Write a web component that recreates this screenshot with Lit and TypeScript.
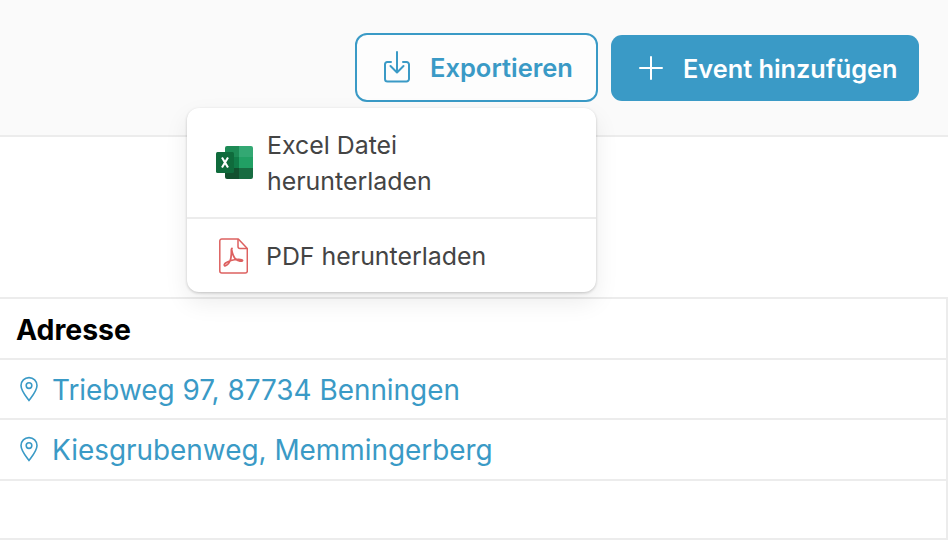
import { LitElement, html, css, svg } from "lit";
import { customElement } from "lit/decorators.js";

const pin = svg`<svg class="pin" width="20" height="26" viewBox="0 0 20 26" fill="none" stroke="#3a9ac6" stroke-width="1.6"><path d="M10 24.6C6.5 20 2 14.8 2 9.6 2 5 5.6 1.6 10 1.6S18 5 18 9.6C18 14.8 13.5 20 10 24.6Z" stroke-linejoin="round"/><circle cx="10" cy="9.6" r="2.8"/></svg>`;

@customElement("app-root")
export class AppRoot extends LitElement {
  static styles = css`
    :host {
      display: block;
      position: relative;
      width: 948px;
      height: 540px;
      overflow: hidden;
      background: #fff;
      font-family: Inter, "Noto Sans", sans-serif;
    }
    .top {
      box-sizing: border-box;
      height: 137px;
      background: #fafafa;
      border-bottom: 2px solid #ececec;
      display: flex;
      justify-content: flex-end;
      align-items: flex-start;
      gap: 13px;
      padding: 33px 29px 0 0;
    }
    .btn {
      box-sizing: border-box;
      display: flex;
      align-items: center;
      font-weight: 600;
      white-space: nowrap;
    }
    .export {
      width: 243px;
      height: 69px;
      border: 2px solid #3a9ac6;
      border-radius: 12px;
      background: #fdfdfd;
      color: #3a9ac6;
      padding-left: 26px;
      gap: 19px;
      font-size: 25.5px;
    }
    .add {
      width: 308px;
      height: 66px;
      margin-top: 2px;
      border-radius: 11px;
      background: #3a9ac6;
      color: #fff;
      padding-left: 28px;
      gap: 20px;
      font-size: 25.3px;
    }
    .menu {
      position: absolute;
      left: 187px;
      top: 108px;
      width: 409px;
      height: 184px;
      background: #fff;
      border-radius: 12px;
      box-shadow: 0 1px 3px rgba(0, 0, 0, 0.2), 0 10px 24px rgba(0, 0, 0, 0.08);
      color: #444;
      font-size: 24.9px;
      line-height: 36px;
      display: flex;
      flex-direction: column;
    }
    .item {
      display: flex;
      align-items: center;
      box-sizing: border-box;
    }
    .item.xl {
      height: 111px;
      padding-left: 29px;
      gap: 14px;
      border-bottom: 2px solid #ececec;
    }
    .item.pdf {
      flex: 1;
      padding-left: 32px;
      gap: 18px;
    }
    .table {
      position: absolute;
      left: 0;
      right: 0;
      top: 297px;
      bottom: 0;
      border-top: 2px solid #ececec;
      border-right: 2px solid #ececec;
      border-bottom: 2px solid #ececec;
      box-sizing: border-box;
    }
    .row {
      box-sizing: border-box;
      height: 60.5px;
      border-bottom: 2px solid #ececec;
      display: flex;
      align-items: center;
      padding-left: 16px;
      font-size: 27.9px;
      color: #3a9ac6;
      gap: 13px;
      white-space: nowrap;
    }
    .row.head {
      color: #000;
      font-weight: 700;
      font-size: 28.4px;
    }
    .label {
      padding-top: 2px;
    }
    .pin {
      margin-left: 3px;
    }
  `;

  render() {
    return html`
      <div class="top">
        <div class="btn export">
          <svg width="28" height="33" viewBox="0 0 28 33" fill="none" stroke="#3a9ac6" stroke-width="2" stroke-linecap="round" stroke-linejoin="round">
            <path d="M8 11H4a2.500 2.500 0 0 0-2 2.500V28a2.500 2.500 0 0 0 2.500 2.500h19A2.500 2.500 0 0 0 26 28V13.500A2.500 2.500 0 0 0 23.500 11H20"/>
            <path d="M14 1v20M7.500 15l6.500 6.500 6.500-6.500"/>
          </svg>
          <span>Exportieren</span>
        </div>
        <div class="btn add">
          <svg width="24" height="24" viewBox="0 0 24 24" fill="none" stroke="#fff" stroke-width="2" stroke-linecap="round"><path d="M12 1v22M1 12h22"/></svg>
          <span>Event hinzufügen</span>
        </div>
      </div>
      <div class="table">
        <div class="row head"><span class="label">Adresse</span></div>
        <div class="row">${pin}<span class="label">Triebweg 97, 87734 Benningen</span></div>
        <div class="row">${pin}<span class="label">Kiesgrubenweg, Memmingerberg</span></div>
      </div>
      <div class="menu">
        <div class="item xl">
          <svg width="37" height="33" viewBox="0 0 37 33">
            <path d="M11 0h12v11H9V2a2 2 0 0 1 2-2Z" fill="#1d8a55"/>
            <path d="M23 0h12a2 2 0 0 1 2 2v9H23Z" fill="#33a873"/>
            <rect x="9" y="11" width="14" height="11" fill="#107c48"/>
            <rect x="23" y="11" width="14" height="11" fill="#21a064"/>
            <path d="M9 22h14v11H11a2 2 0 0 1-2-2Z" fill="#12512f"/>
            <path d="M23 22h14v9a2 2 0 0 1-2 2H23Z" fill="#176c41"/>
            <rect x="0" y="6" width="18" height="21" rx="1.500" fill="#0f6b3c"/>
            <path d="M6 11.500l6 10M12 11.500l-6 10" stroke="#fff" stroke-width="2.100" fill="none"/>
          </svg>
          <span>Excel Datei<br />herunterladen</span>
        </div>
        <div class="item pdf">
          <svg width="29" height="36" viewBox="0 0 29 36" fill="none" stroke="#dd6160" stroke-width="1.500" stroke-linejoin="round">
            <path d="M2.500 1h16.500l9 9.500V33a2 2 0 0 1-2 2H2.500a2 2 0 0 1-2-2V3a2 2 0 0 1 2-2Z" transform="translate(.3 0)"/>
            <path d="M19 1v7.500a2 2 0 0 0 2 2h7" />
            <path d="M13 10.500c-1.500 0 .5 7-2 12.500-1.500 3.400-4.500 5.500-5.500 4.500-1-1.200 2-3.600 6.500-5 4-1.300 11-1.800 11.500-.2.400 1.500-4.500 1.200-7.500-2-2.300-2.600-4-9.800-3-9.800Z" stroke-width="1.800"/>
          </svg>
          <span>PDF herunterladen</span>
        </div>
      </div>
    `;
  }
}
